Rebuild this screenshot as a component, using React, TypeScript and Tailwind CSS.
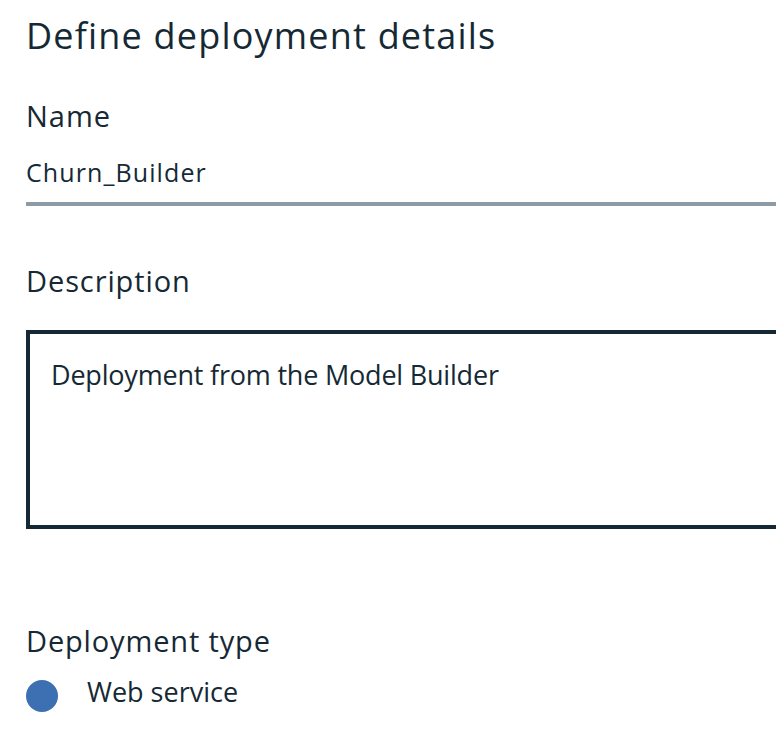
export default function App() {
  return (
    <div className="w-[776px] h-[750px] overflow-hidden bg-white text-[#152935] font-['Open_Sans',sans-serif]">
      <div className="w-[820px] pl-[26px] pt-[14px]">
        {/* Heading */}
        <h1 className="text-[36px] leading-[44px] font-normal tracking-[1.2px]">Define deployment details</h1>

        {/* Name field */}
        <div className="mt-[40px] text-[29px] leading-[36px] tracking-[1px]">Name</div>
        <div className="mt-[22px] pb-[14px] border-b-4 border-[#8c9ba5] text-[25px] leading-[32px] tracking-[1.1px]">
          Churn_Builder
        </div>

        {/* Description field */}
        <div className="mt-[57px] text-[29px] leading-[36px] tracking-[0.9px]">Description</div>
        <div className="mt-[31px] h-[199px] border-4 border-[#152935] pl-[21px] pt-[24px]">
          <div className="text-[27px] leading-[34px] tracking-[-0.2px]">Deployment from the Model Builder</div>
        </div>

        {/* Deployment type */}
        <div className="mt-[94px] text-[29px] leading-[36px] tracking-[0.85px]">Deployment type</div>
        <div className="mt-[21px] flex items-start gap-[29px]">
          <div className="w-[32px] h-[32px] rounded-full bg-[#3d70b2]" />
          <div className="text-[27px] leading-[24px]">Web service</div>
        </div>
      </div>
    </div>
  );
}
